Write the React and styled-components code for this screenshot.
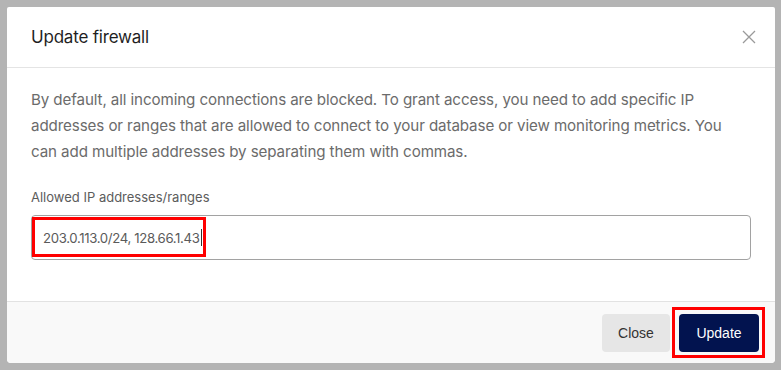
import React from "react";
import styled, { createGlobalStyle } from "styled-components";

const GlobalStyle = createGlobalStyle`
    html, body {
        margin: 0;
        padding: 0;
        background: #b4b4b4;
    }
    body {
        padding: 7px 6px 7px 7px;
        font-family: "Inter", "Liberation Sans", sans-serif;
    }
`;

const Modal = styled.div`
    width: 768px;
    height: 356px;
    background: #fff;
    border-radius: 2px 2px 4px 4px;
    display: flex;
    flex-direction: column;
    overflow: hidden;
`;

const Header = styled.div`
    height: 60px;
    flex: none;
    display: flex;
    align-items: center;
    justify-content: space-between;
    padding: 0 19px 0 24px;
    border-bottom: 1px solid #e4e4e4;
`;

const Title = styled.h2`
    margin: 0;
    font-size: 17px;
    font-weight: 400;
    color: #1f1f1f;
    letter-spacing: -0.2px;
`;

const CloseIcon = styled.button`
    border: 0;
    background: none;
    padding: 0;
    width: 14px;
    height: 14px;
    display: flex;
    cursor: pointer;
`;

const Body = styled.div`
    flex: 1;
    padding: 19px 24px 0 24px;
`;

const Text = styled.p`
    margin: 0;
    font-size: 15.15px;
    line-height: 26px;
    color: #6b6b6b;
    letter-spacing: -0.1px;
`;

const Label = styled.label`
    display: block;
    margin-top: 23px;
    font-size: 13px;
    line-height: 18px;
    color: #5c5c5c;
`;

const Field = styled.div`
    position: relative;
    margin-top: 9px;
    height: 43px;
    border: 1px solid #a2a2a2;
    border-radius: 4px;
    display: flex;
    align-items: center;
    padding-left: 11px;
    font-size: 13.2px;
    color: #5a5a5a;
    letter-spacing: -0.35px;
`;

const Caret = styled.span`
    display: inline-block;
    width: 1px;
    height: 17px;
    background: #333;
    vertical-align: middle;
    margin-left: 1px;
`;

const Mark = styled.div`
    position: absolute;
    border: 3px solid #ff0000;
    pointer-events: none;
`;

const Footer = styled.div`
    height: 61px;
    flex: none;
    border-top: 1px solid #e2e2e2;
    background: #f9f9f9;
    display: flex;
    align-items: center;
    justify-content: flex-end;
    gap: 9px;
    padding: 0 16px 0 0;
    position: relative;
`;

const Button = styled.button`
    height: 38px;
    width: ${p => (p.primary ? "80px" : "68px")};
    padding: 0;
    border: 0;
    border-radius: 4px;
    font-family: "Liberation Sans", sans-serif;
    font-size: 14px;
    background: ${p => (p.primary ? "#02134f" : "#e6e6e6")};
    color: ${p => (p.primary ? "#ffffff" : "#333333")};
    margin-top: 1px;
`;

export default function App() {
    return (
        <>
            <GlobalStyle />
            <Modal>
                <Header>
                    <Title>Update firewall</Title>
                    <CloseIcon aria-label="Close">
                        <svg width="14" height="14" viewBox="0 0 14 14">
                            <path d="M1 1L13 13M13 1L1 13" stroke="#9a9a9a" strokeWidth="1.3" fill="none" />
                        </svg>
                    </CloseIcon>
                </Header>
                <Body>
                    <Text>
                        By default, all incoming connections are blocked. To grant access, you need to add specific IP
                        addresses or ranges that are allowed to connect to your database or view monitoring metrics. You
                        can add multiple addresses by separating them with commas.
                    </Text>
                    <Label>Allowed IP addresses/ranges</Label>
                    <Field>
                        <span>203.0.113.0/24, 128.66.1.43</span>
                        <Caret />
                        <Mark style={{ left: 0, top: 1, width: 168, height: 34 }} />
                    </Field>
                </Body>
                <Footer>
                    <Button>Close</Button>
                    <Button primary>Update</Button>
                    <Mark style={{ right: 10, top: 5, width: 87, height: 45 }} />
                </Footer>
            </Modal>
        </>
    );
}
